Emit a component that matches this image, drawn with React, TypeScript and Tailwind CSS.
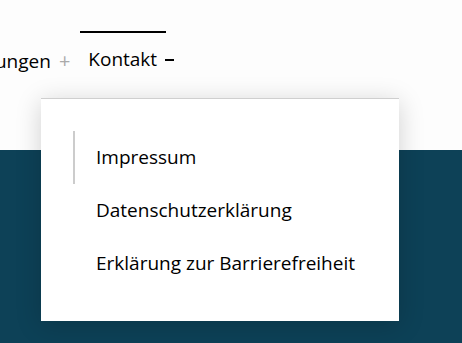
export default function App() {
  const items = ['Impressum', 'Datenschutzerklärung', 'Erklärung zur Barrierefreiheit'];

  return (
    <div className="relative h-[343px] w-[462px] overflow-hidden bg-white font-['Open_Sans',sans-serif] text-black">
      {/* top navigation */}
      <div className="h-[150px] bg-[#fdfdfd]">
        <nav className="flex items-start pt-[31px] -ml-[95px] text-[19px] leading-none">
          <div className="flex items-center gap-[8px] pt-[20px]">
            <span>Veranstaltungen</span>
            <span className="text-[#aaa] text-[20px]">+</span>
          </div>
          <div className="ml-[10px] flex flex-col">
            <div className="h-[2px] w-[86px] bg-black"></div>
            <div className="flex items-center pt-[17px] pl-[8px]">
              <span>Kontakt</span>
              <span className="ml-[8px] h-[2px] w-[9px] bg-black"></span>
            </div>
          </div>
        </nav>
      </div>

      {/* teal band */}
      <div className="h-[193px] bg-[#0d4157]"></div>

      {/* dropdown */}
      <div className="absolute left-[41px] top-[98px] w-[358px] h-[223px] bg-white border-t border-[#cfcfcf] shadow-[0_4px_24px_rgba(0,0,0,0.18)]">
        <ul className="flex flex-col pt-[32px] pl-[32px]">
          {items.map((item, i) => (
            <li
              key={item}
              className={`flex h-[53px] items-center pl-[21px] text-[19px] ${
                i === 0 ? 'border-l-2 border-[#cccccc]' : 'border-l-2 border-transparent'
              }`}
            >
              {item}
            </li>
          ))}
        </ul>
      </div>
    </div>
  );
}
